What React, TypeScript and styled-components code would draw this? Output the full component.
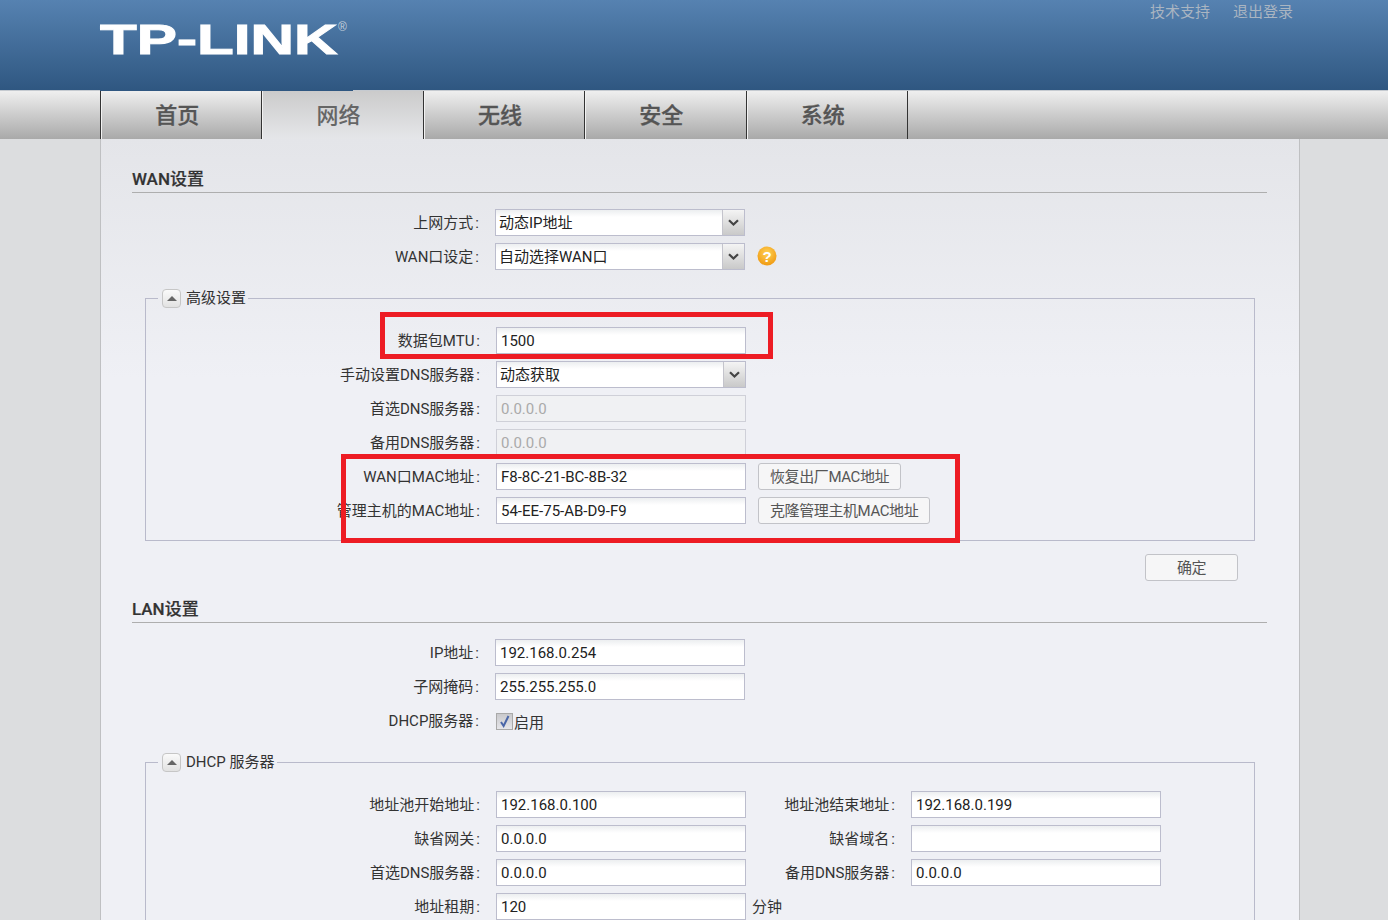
import React from "react";
import styled, { createGlobalStyle } from "styled-components";

const GlobalStyle = createGlobalStyle`
  html, body {
    margin: 0;
    height: 920px;
    overflow: hidden;
    background: #dcdddf;
    font-family: Roboto, "Noto Sans CJK SC", sans-serif;
    font-size: 15px;
    color: #333;
  }
`;

const Page = styled.div`
  position: relative;
  width: 1388px;
  height: 920px;
  overflow: hidden;
`;
const Header = styled.header`
  position: relative;
  box-sizing: border-box;
  height: 91px;
  display: flex;
  justify-content: space-between;
  padding: 0 94px 0 100px;
  background: linear-gradient(#5682b1, #2f5781);
  border-bottom: 1px solid #c5cad0;
  &::after {
    content: "";
    position: absolute;
    left: 100px;
    bottom: -1px;
    width: 253px;
    height: 1px;
    background: #2f5781;
  }
`;
const Logo = styled.div`
  display: flex;
  align-items: flex-start;
  height: 60px;
  padding-top: 15px;
  box-sizing: border-box;
`;
const LogoWord = styled.span`
  display: block;
  width: 238px;
  font-family: "Liberation Sans", sans-serif;
  font-weight: 700;
  font-size: 43px;
  line-height: 49px;
  color: #fff;
  -webkit-text-stroke: 1px #fff;
  white-space: nowrap;
  transform: scaleX(1.4);
  transform-origin: left top;
`;
const LogoMark = styled.span`
  font-family: "Liberation Sans", sans-serif;
  font-size: 12px;
  line-height: 24px;
  color: #c5d0dc;
`;
const TopLinks = styled.div`
  display: flex;
  gap: 23px;
  padding-top: 2px;
  padding-right: 1px;
`;
const TopLink = styled.a`
  font-size: 15px;
  line-height: 20px;
  color: #aab5c1;
`;
const Nav = styled.nav`
  box-sizing: border-box;
  height: 48px;
  padding-left: 100px;
  display: flex;
  background: linear-gradient(#efefef, #a9a9a9);
`;
const Tab = styled.div<{ $active?: boolean }>`
  box-sizing: border-box;
  width: 161.4px;
  display: flex;
  align-items: center;
  justify-content: center;
  padding: 0 8px 4px 0;
  border-left: 1px solid #333;
  box-shadow: inset 1px 0 0 #f2f2f2;
  font-size: 22px;
  font-weight: 500;
  -webkit-text-stroke: ${(p) => (p.$active ? "0" : "0.3px")};
  color: ${(p) => (p.$active ? "#666" : "#555")};
  background: ${(p) => (p.$active ? "linear-gradient(#cbcbcb, #e5e6e9)" : "none")};
  &:last-child {
    width: 1px;
    padding: 0;
    box-shadow: none;
  }
`;
const Main = styled.main`
  box-sizing: border-box;
  width: 1200px;
  height: 781px;
  margin-left: 100px;
  padding: 28px 32px 0 31px;
  background: linear-gradient(#e4e5e9, #eff0f5 240px);
  border-left: 1px solid #bfc0c2;
  border-right: 1px solid #bfc0c2;
`;
const SectionTitle = styled.h2`
  box-sizing: border-box;
  margin: 0 0 16px;
  height: 26px;
  font-size: 17px;
  font-weight: 500;
  line-height: 24px;
  -webkit-text-stroke: 0.2px #333;
  color: #333;
  border-bottom: 1px solid #aeaeae;
`;
const Row = styled.div`
  display: flex;
  align-items: center;
  height: 27px;
  margin-bottom: 7px;
`;
const Label = styled.label<{ $width: number }>`
  box-sizing: border-box;
  flex: none;
  width: ${(p) => p.$width}px;
  height: 27px;
  margin-right: 15px;
  padding-right: 1px;
  text-align: right;
  white-space: nowrap;
  line-height: 29px;
  color: #333;
`;
const Colon = styled.span`
  margin-left: 2px;
`;
const TextInput = styled.input`
  box-sizing: border-box;
  flex: none;
  width: 250px;
  height: 27px;
  padding: 0 4px;
  font: inherit;
  color: #222;
  background: linear-gradient(#eceef0, #fff 7px);
  border: 1px solid #bcbdcd;
  outline: none;
  &:disabled {
    color: #aaa;
    background: #f0f1f3;
    border-color: #cfd0d8;
  }
`;
const SelectBox = styled.div`
  box-sizing: border-box;
  flex: none;
  width: 250px;
  height: 27px;
  display: flex;
  align-items: center;
  justify-content: space-between;
  padding-left: 3px;
  color: #222;
  background: linear-gradient(#eceef0, #fff 7px);
  border: 1px solid #bcbdcd;
`;
const SelectValue = styled.span`
  margin-top: -2px;
`;
const SelectArrow = styled.span`
  width: 21px;
  height: 25px;
  display: flex;
  align-items: center;
  justify-content: center;
  background: linear-gradient(#f4f4f4, #c9c9c9);
  border-left: 1px solid #c4c4cc;
`;
const HelpIcon = styled.svg`
  margin-left: 12px;
  margin-top: -2px;
`;
const Fieldset = styled.fieldset`
  box-sizing: border-box;
  margin: 18px 12px 0 13px;
  padding: 19px 0 9px;
  min-width: 0;
  border: 1px solid #b9bacb;
`;
const Legend = styled.legend`
  display: flex;
  align-items: center;
  gap: 5px;
  height: 20px;
  margin-left: 12px;
  padding: 0 2px 0 4px;
  line-height: 20px;
  color: #333;
`;
const Toggle = styled.span`
  box-sizing: border-box;
  width: 19px;
  height: 19px;
  display: flex;
  align-items: center;
  justify-content: center;
  background: linear-gradient(#fafafa, #e2e2e2);
  border: 1px solid #c6c6c6;
  border-radius: 4px;
  &::before {
    content: "";
    border-left: 5px solid transparent;
    border-right: 5px solid transparent;
    border-bottom: 5px solid #666;
  }
`;
const ActionButton = styled.button`
  box-sizing: border-box;
  height: 27px;
  margin-left: 12px;
  padding: 0 11px 2px;
  font: inherit;
  letter-spacing: -0.4px;
  color: #555;
  background: #f6f6f7;
  border: 1px solid #c2c3c8;
  border-radius: 3px;
`;
const Actions = styled.div`
  display: flex;
  justify-content: flex-end;
  margin: 13px 29px 16px 0;
`;
const ConfirmButton = styled(ActionButton)`
  width: 93px;
  margin: 0;
`;
const CheckBox = styled.span`
  box-sizing: border-box;
  width: 17px;
  height: 17px;
  margin-left: 1px;
  margin-top: 1px;
  display: flex;
  align-items: center;
  justify-content: center;
  background: linear-gradient(#c9c9cc, #e6e6ea);
  border: 1px solid #a9a9a9;
`;
const CheckText = styled.span`
  margin-top: 2px;
  margin-left: 1px;
`;
const Unit = styled.span`
  margin-left: 6px;
  margin-top: -3px;
`;
const Annotation = styled.div<{ $left: number; $top: number; $width: number; $height: number }>`
  position: absolute;
  box-sizing: border-box;
  left: ${(p) => p.$left}px;
  top: ${(p) => p.$top}px;
  width: ${(p) => p.$width}px;
  height: ${(p) => p.$height}px;
  border: 5px solid #ed1c24;
`;

const TABS = ["首页", "网络", "无线", "安全", "系统"];

const Select = ({ value }: { value: string }) => (
  <SelectBox>
    <SelectValue>{value}</SelectValue>
    <SelectArrow>
      <svg width="11" height="7" viewBox="0 0 11 7">
        <path d="M1 1.2 5.5 5.5 10 1.2" fill="none" stroke="#444" strokeWidth="2.2" />
      </svg>
    </SelectArrow>
  </SelectBox>
);

const Field = ({ value, disabled }: { value: string; disabled?: boolean }) => (
  <TextInput readOnly value={value} disabled={disabled} />
);

const FieldLabel = ({ width, text }: { width: number; text: string }) => (
  <Label $width={width}>
    {text}
    <Colon>:</Colon>
  </Label>
);

export default function App() {
  return (
    <Page>
      <GlobalStyle />
      <Header>
        <Logo>
          <LogoWord>TP-LINK</LogoWord>
          <LogoMark>®</LogoMark>
        </Logo>
        <TopLinks>
          <TopLink>技术支持</TopLink>
          <TopLink>退出登录</TopLink>
        </TopLinks>
      </Header>
      <Nav>
        {TABS.map((t) => (
          <Tab key={t} $active={t === "网络"}>
            {t}
          </Tab>
        ))}
        <Tab />
      </Nav>
      <Main>
        <SectionTitle>WAN设置</SectionTitle>
        <Row>
          <FieldLabel width={348} text="上网方式" />
          <Select value="动态IP地址" />
        </Row>
        <Row>
          <FieldLabel width={348} text="WAN口设定" />
          <Select value="自动选择WAN口" />
          <HelpIcon width="20" height="20" viewBox="0 0 20 20">
            <defs>
              <radialGradient id="help" cx="50%" cy="35%" r="65%">
                <stop offset="0" stopColor="#ffd257" />
                <stop offset="1" stopColor="#f09a12" />
              </radialGradient>
            </defs>
            <circle cx="10" cy="10" r="9.5" fill="url(#help)" />
            <text x="10" y="15.5" textAnchor="middle" fontSize="15" fontWeight="700" fill="#fff" fontFamily="Liberation Sans, sans-serif">
              ?
            </text>
          </HelpIcon>
        </Row>
        <Fieldset>
          <Legend>
            <Toggle />
            高级设置
          </Legend>
          <Row>
            <FieldLabel width={335} text="数据包MTU" />
            <Field value="1500" />
          </Row>
          <Row>
            <FieldLabel width={335} text="手动设置DNS服务器" />
            <Select value="动态获取" />
          </Row>
          <Row>
            <FieldLabel width={335} text="首选DNS服务器" />
            <Field value="0.0.0.0" disabled />
          </Row>
          <Row>
            <FieldLabel width={335} text="备用DNS服务器" />
            <Field value="0.0.0.0" disabled />
          </Row>
          <Row>
            <FieldLabel width={335} text="WAN口MAC地址" />
            <Field value="F8-8C-21-BC-8B-32" />
            <ActionButton>恢复出厂MAC地址</ActionButton>
          </Row>
          <Row>
            <FieldLabel width={335} text="管理主机的MAC地址" />
            <Field value="54-EE-75-AB-D9-F9" />
            <ActionButton>克隆管理主机MAC地址</ActionButton>
          </Row>
        </Fieldset>
        <Actions>
          <ConfirmButton>确定</ConfirmButton>
        </Actions>
        <SectionTitle>LAN设置</SectionTitle>
        <Row>
          <FieldLabel width={348} text="IP地址" />
          <Field value="192.168.0.254" />
        </Row>
        <Row>
          <FieldLabel width={348} text="子网掩码" />
          <Field value="255.255.255.0" />
        </Row>
        <Row>
          <FieldLabel width={348} text="DHCP服务器" />
          <CheckBox>
            <svg width="11" height="13" viewBox="0 0 11 13">
              <path d="M2 7 4.6 11 9.5 1" fill="none" stroke="#4a66a8" strokeWidth="2" />
            </svg>
          </CheckBox>
          <CheckText>启用</CheckText>
        </Row>
        <Fieldset>
          <Legend>
            <Toggle />
            DHCP 服务器
          </Legend>
          <Row>
            <FieldLabel width={335} text="地址池开始地址" />
            <Field value="192.168.0.100" />
            <FieldLabel width={150} text="地址池结束地址" />
            <Field value="192.168.0.199" />
          </Row>
          <Row>
            <FieldLabel width={335} text="缺省网关" />
            <Field value="0.0.0.0" />
            <FieldLabel width={150} text="缺省域名" />
            <Field value="" />
          </Row>
          <Row>
            <FieldLabel width={335} text="首选DNS服务器" />
            <Field value="0.0.0.0" />
            <FieldLabel width={150} text="备用DNS服务器" />
            <Field value="0.0.0.0" />
          </Row>
          <Row>
            <FieldLabel width={335} text="地址租期" />
            <Field value="120" />
            <Unit>分钟</Unit>
          </Row>
        </Fieldset>
      </Main>
      <Annotation $left={380} $top={312} $width={393} $height={47} />
      <Annotation $left={341} $top={454} $width={619} $height={89} />
    </Page>
  );
}
